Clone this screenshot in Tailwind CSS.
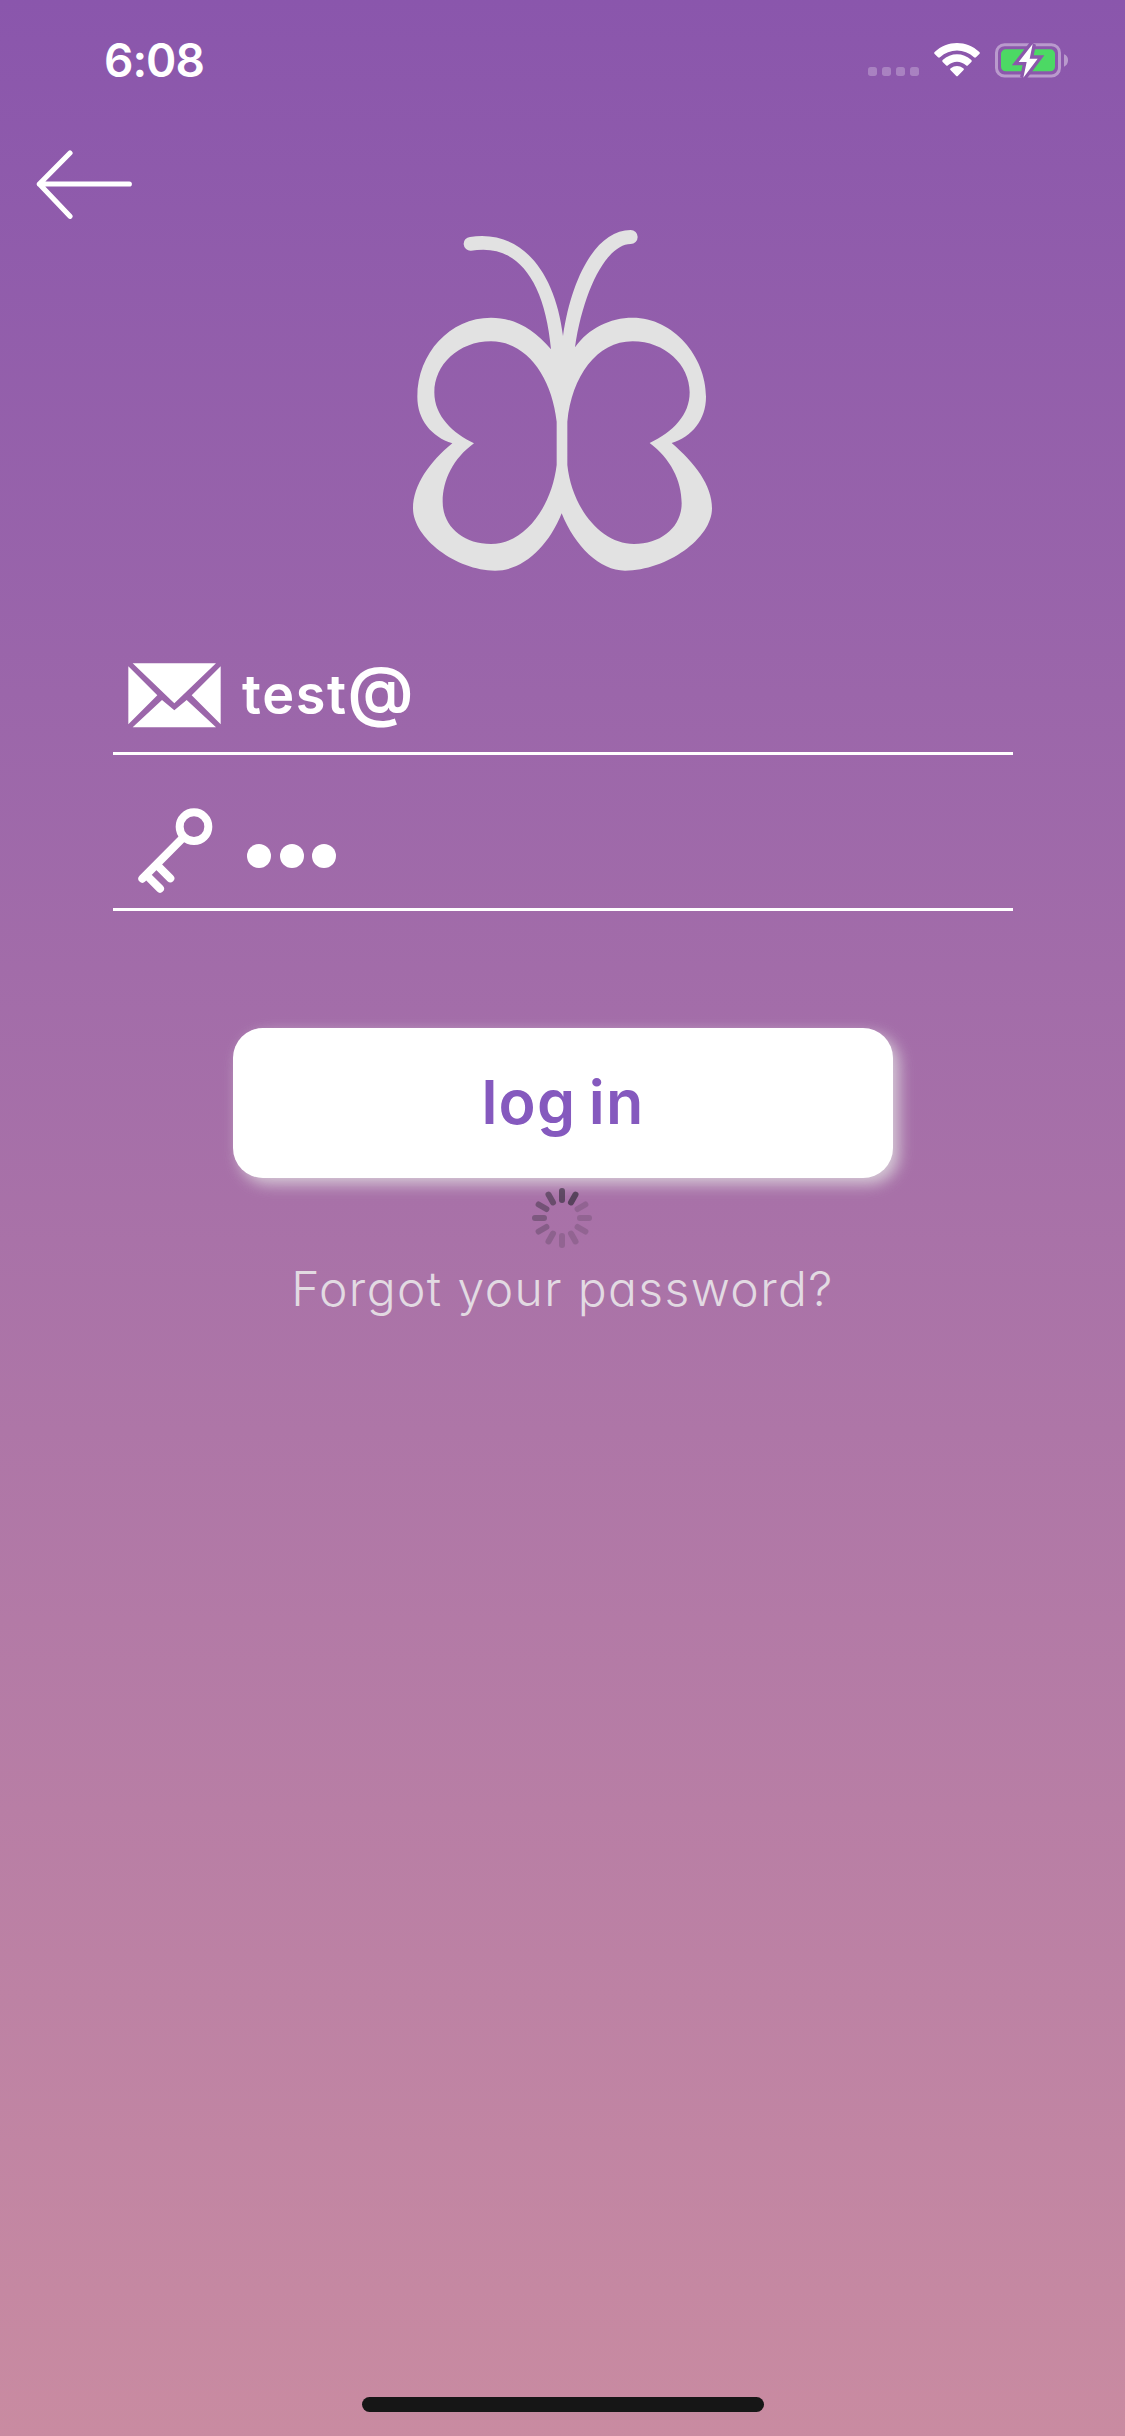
<!DOCTYPE html>
<html lang="en">
<head>
<meta charset="utf-8">
<title>Log in</title>
<script src="https://cdn.jsdelivr.net/npm/@tailwindcss/browser@4"></script>
</head>
<body class="bg-[#c98aa1]">
<main class="flex h-[2436px] w-[1125px] flex-col bg-linear-to-b from-[#8a56ac] to-[#c98ba1] font-[Inter,sans-serif] text-white">
  <!-- status bar -->
  <header class="flex h-[120px] items-start justify-between pl-[104px] pr-[56px]">
    <time class="pt-[33px] text-[46px] leading-[54px] font-semibold tracking-[-1px]">6:08</time>
    <div class="flex pt-[43px]">
      <svg class="mt-6 mr-[15px] h-[9px] w-[51px]" viewBox="0 0 153 27" fill="#fff" fill-opacity=".25">
        <rect width="27" height="27" rx="8"/><rect x="42" width="27" height="27" rx="8"/><rect x="84" width="27" height="27" rx="8"/><rect x="126" width="27" height="27" rx="8"/>
      </svg>
      <svg class="mr-[15px] h-[34px] w-[46px]" viewBox="282 68 138 102" fill="#fff">
        <path d="M284 95C322 59 380 59 418 95Q421 98 418 101L408 111Q405 113 402 111C373 84 329 84 300 111Q297 113 294 111L284 101Q281 98 284 95Z"/>
        <path d="M308 119C333 96 369 96 394 119Q397 122 394 125L384 135Q381 138 378 135C362 121 340 121 324 135Q321 138 318 135L308 125Q305 122 308 119Z"/>
        <path d="M332 144Q351 130 370 144Q374 147 370 150L354 166Q351 169 348 166L332 150Q328 147 332 144Z"/>
      </svg>
      <svg class="h-[35px] w-[74px]" viewBox="465 68 222 105">
        <rect x="469.500" y="73" width="189" height="94" rx="24" fill="none" stroke="#fff" stroke-opacity=".4" stroke-width="9"/>
        <path d="M672 102Q684 106 684 120T672 139Z" fill="#fff" fill-opacity=".4"/>
        <rect x="483" y="87" width="162" height="66" rx="14" fill="#4cd964"/>
        <path d="M578 71L536 125H560L550 172L593 115H569Z" fill="#fff" stroke="#8b57ab" stroke-width="20" paint-order="stroke"/>
      </svg>
    </div>
  </header>

  <nav class="h-[110px] pt-[30px] pl-[36px]">
    <svg class="h-[70px] w-[97px]" viewBox="108 450 291 210" fill="none" stroke="#fff" stroke-width="15.500" stroke-linecap="round" stroke-linejoin="round" aria-label="Back">
      <path d="M210 459L118 552L210 649M118 552H388"/>
    </svg>
  </nav>

  <!-- butterfly logo -->
  <svg class="ml-[390px] h-[342px] w-[350px] shrink-0" viewBox="0 60 1050 1026" fill="#e2e2e2" fill-rule="evenodd">
    <path d="M483 418C430 355 370 323 303 323C180 323 82 430 82 560C82 630 125 680 187 700C120 755 69 825 69 895C69 985 200 1082 315 1082C400 1082 475 1010 515 910C555 1010 630 1082 705 1082C830 1082 966 985 966 895C966 825 915 760 845 699C905 680 948 630 948 560C948 440 850 323 728 323C660 323 595 355 555 412C580 240 650 103 722 102A20.500 20.500 0 0 0 722 60C620 60 545 200 519 378C497 200 410 78 276 78Q258 78 240 81A20.500 20.500 0 0 0 243 122Q260 119 280 119C390 119 465 220 483 418Z
    M500 635C485 500 410 394 303 394C205 394 133 465 133 547C133 620 190 670 252 700C190 745 158 810 158 875C158 950 220 1002 303 1002C405 1002 485 890 500 765Z
    M532 635C545 500 620 394 728 394C825 394 899 465 899 547C899 615 850 665 779 699C840 745 875 810 875 880C875 950 815 1002 732 1002C630 1002 545 890 532 765Z"/>
  </svg>

  <form class="flex flex-col">
    <label class="mr-[112px] ml-[113px] mt-[80px] flex h-[103px] border-b-3 border-white pl-[15px]">
      <svg class="mt-[11px] h-[65px] w-[93px] shrink-0" viewBox="84 68 279 195" fill="#fff">
        <path d="M98 69H348L223 189ZM85 78L172 165L85 252ZM362 78V252L275 165ZM98 261L186 179L223 210L260 179L348 261Z"/>
      </svg>
      <span class="ml-[21px] h-[86px] text-[54px] leading-[86px] font-semibold tracking-[1.6px]">test<span class="text-[66px] leading-[0] font-semibold">@</span></span>
    </label>
    <label class="mr-[112px] ml-[113px] mt-[30px] flex h-[126px] border-b-3 border-white pl-[25px]">
      <svg class="mt-[23px] h-[85px] w-[75px] shrink-0" viewBox="112 505 225 255" fill="none" stroke="#fff" stroke-width="24" stroke-linecap="round">
        <circle cx="280" cy="561" r="43"/>
        <path d="M245 596L125 717M143 712L178 747M176 683L209 716"/>
      </svg>
      <span class="mt-[59px] ml-[34px] flex gap-[8.500px]">
        <i class="size-6 rounded-full bg-white"></i><i class="size-6 rounded-full bg-white"></i><i class="size-6 rounded-full bg-white"></i>
      </span>
    </label>
    <button type="button" class="mt-[117px] ml-[233px] h-[150px] w-[660px] rounded-[30px] bg-white text-[61px] font-semibold tracking-[1.2px] [word-spacing:-4px] text-[#8559be] shadow-[6px_6px_15px_rgba(226,226,226,.8)]">log in</button>
  </form>

  <svg class="mt-[9px] ml-[531px] h-[62px] w-[62px] shrink-0" viewBox="-31 -31 62 62" stroke="#38303f" stroke-width="6" stroke-linecap="round">
    <path d="M0-27V-18" opacity=".65"/>
    <path d="M0-27V-18" transform="rotate(30)" opacity=".72"/>
    <path d="M0-27V-18" transform="rotate(60)" opacity=".2"/>
    <path d="M0-27V-18" transform="rotate(90)" opacity=".2"/>
    <path d="M0-27V-18" transform="rotate(120)" opacity=".2"/>
    <path d="M0-27V-18" transform="rotate(150)" opacity=".2"/>
    <path d="M0-27V-18" transform="rotate(180)" opacity=".2"/>
    <path d="M0-27V-18" transform="rotate(210)" opacity=".24"/>
    <path d="M0-27V-18" transform="rotate(240)" opacity=".3"/>
    <path d="M0-27V-18" transform="rotate(270)" opacity=".38"/>
    <path d="M0-27V-18" transform="rotate(300)" opacity=".47"/>
    <path d="M0-27V-18" transform="rotate(330)" opacity=".56"/>
  </svg>
  <a class="mt-[10px] text-center text-[48px] leading-[60px] font-light tracking-[1.4px] whitespace-nowrap text-[#e2dae2] [font-feature-settings:'cv11']">Forgot your password?</a>

  <div class="mx-auto mt-auto mb-[24px] h-[15px] w-[402px] shrink-0 rounded-full bg-[#161616]"></div>
</main>
</body>
</html>
